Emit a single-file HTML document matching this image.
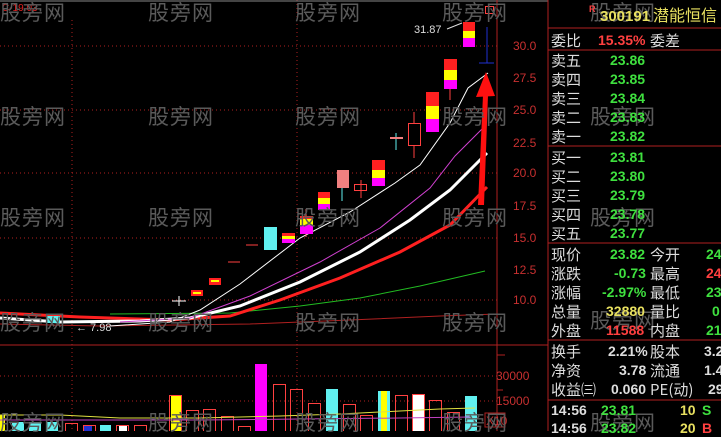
<!DOCTYPE html>
<html><head><meta charset="utf-8"><style>
body{margin:0;background:#000;width:721px;height:431px;overflow:hidden;position:relative;font-family:"Liberation Sans","Noto Sans CJK SC",sans-serif}
.wm{position:absolute;color:#5a5a5a;font-size:21px;font-family:"Noto Sans CJK SC",sans-serif;line-height:21px;letter-spacing:1px}
.t{position:absolute;font-size:15px;line-height:17px;white-space:nowrap;font-family:"Noto Sans CJK SC",sans-serif}
.v{position:absolute;font-size:14px;line-height:17px;font-weight:bold;white-space:nowrap;text-align:right;font-family:"Liberation Sans",sans-serif}
.g{color:#3fe03f}.w{color:#ddd}.r{color:#ff4040}.y{color:#e8e060}
</style></head><body>
<svg width="721" height="431" style="position:absolute;left:0;top:0">
<g stroke="#b02020" stroke-dasharray="1,3" stroke-width="1">
<line x1="0" y1="46" x2="497" y2="46"/><line x1="0" y1="110" x2="497" y2="110"/><line x1="0" y1="173" x2="497" y2="173"/><line x1="0" y1="238" x2="497" y2="238"/><line x1="0" y1="300" x2="497" y2="300"/>
<line x1="72" y1="20" x2="72" y2="431"/><line x1="297" y1="0" x2="297" y2="431"/>
<line x1="0" y1="376" x2="497" y2="376"/><line x1="0" y1="401" x2="497" y2="401"/>
</g>
<line x1="0" y1="1" x2="548" y2="1" stroke="#888"/>
<line x1="497" y1="0" x2="497" y2="431" stroke="#b02020"/>
<line x1="0" y1="345" x2="548" y2="345" stroke="#b02020"/>
<line x1="548" y1="0" x2="548" y2="431" stroke="#b02020"/>
<g fill="#c83030" font-size="12" font-family="Liberation Sans">
<text x="513" y="50">30.0</text><text x="513" y="82">27.5</text><text x="513" y="114">25.0</text><text x="513" y="147">22.5</text><text x="513" y="177">20.0</text><text x="513" y="210">17.5</text><text x="513" y="242">15.0</text><text x="513" y="274">12.5</text><text x="513" y="304">10.0</text>
<text x="496" y="380">30000</text><text x="496" y="405">15000</text>
</g>
<line x1="497" y1="355" x2="505" y2="355" stroke="#b02020"/><line x1="497" y1="390" x2="503" y2="390" stroke="#b02020"/>
<rect x="485" y="413" width="20" height="14" fill="none" stroke="#b02020"/><text x="486" y="425" fill="#c83030" font-size="12">X10</text>
<text x="2" y="11" fill="#e02020" font-size="10">C-19.03</text>
<!-- MAs -->
<polyline fill="none" stroke="#b02020" stroke-width="1" points="0,324 100,326 250,324 350,320 440,316 497,314"/>
<polyline fill="none" stroke="#22bb22" stroke-width="1" points="110,314 230,313 300,306 360,298 420,286 485,271"/>
<polyline fill="none" stroke="#ff2020" stroke-width="3" points="0,313 80,317 170,320 230,316 280,300 340,278 400,252 450,225 487,187"/>
<polyline fill="none" stroke="#fff" stroke-width="3" points="0,318 60,322 140,321 190,318 240,306 300,282 360,252 410,220 450,190 487,153"/>
<polyline fill="none" stroke="#d040d0" stroke-width="1" points="120,322 190,318 250,296 320,262 380,228 430,188 455,156 483,128"/>
<polyline fill="none" stroke="#fff" stroke-width="1" points="110,326 170,322 200,310 240,284 300,238 350,212 395,183 420,165 450,123 468,88 488,73"/>
<!-- candles -->
<line x1="172" y1="301" x2="186" y2="301" stroke="#fff"/><line x1="179" y1="296" x2="179" y2="306" stroke="#fff"/>
<rect x="191" y="290" width="12" height="6" fill="#ff2020"/><rect x="193" y="292" width="8" height="2" fill="#ff0"/>
<rect x="209" y="278" width="12" height="7" fill="#ff2020"/><rect x="211" y="280" width="8" height="2" fill="#ff0"/>
<line x1="228" y1="262" x2="240" y2="262" stroke="#ff4040"/>
<line x1="246" y1="245" x2="258" y2="245" stroke="#ff4040"/>
<rect x="264" y="227" width="13" height="23" fill="#60f0f0"/>
<rect x="282" y="233" width="13" height="10" fill="#ff2020"/><rect x="282" y="236" width="13" height="3" fill="#ff0"/><rect x="282" y="239" width="13" height="4" fill="#f0f"/>
<line x1="306" y1="209" x2="306" y2="237" stroke="#ff6060"/>
<rect x="300" y="216" width="13" height="18" fill="#ff2020"/><rect x="300" y="219" width="13" height="6" fill="#ff0"/><rect x="300" y="225" width="13" height="9" fill="#f0f"/>
<rect x="318" y="192" width="12" height="18" fill="#ff2020"/><rect x="318" y="198" width="12" height="6" fill="#ff0"/><rect x="318" y="204" width="12" height="6" fill="#f0f"/>
<line x1="342" y1="188" x2="342" y2="201" stroke="#60f0f0"/><rect x="337" y="170" width="12" height="18" fill="#f08080"/>
<line x1="361" y1="180" x2="361" y2="198" stroke="#ff4040"/><rect x="354.5" y="184.5" width="12" height="6" fill="none" stroke="#ff4040"/>
<rect x="372" y="160" width="13" height="26" fill="#ff2020"/><rect x="372" y="170" width="13" height="8" fill="#ff0"/><rect x="372" y="178" width="13" height="8" fill="#f0f"/>
<line x1="396" y1="133" x2="396" y2="150" stroke="#60f0f0"/><line x1="390" y1="138" x2="403" y2="138" stroke="#f08080" stroke-width="2"/>
<line x1="414" y1="112" x2="414" y2="158" stroke="#ff4040"/><rect x="408.5" y="123.5" width="12" height="22" fill="#000" stroke="#ff4040"/>
<rect x="426" y="92" width="13" height="40" fill="#ff2020"/><rect x="426" y="106" width="13" height="13" fill="#ff0"/><rect x="426" y="119" width="13" height="13" fill="#f0f"/>
<line x1="450" y1="88" x2="450" y2="100" stroke="#ff4040"/>
<rect x="444" y="59" width="13" height="30" fill="#ff2020"/><rect x="444" y="70" width="13" height="10" fill="#ff0"/><rect x="444" y="80" width="13" height="9" fill="#f0f"/>
<rect x="463" y="22" width="12" height="25" fill="#ff2020"/><rect x="463" y="31" width="12" height="7" fill="#ff0"/><rect x="463" y="38" width="12" height="9" fill="#f0f"/>
<rect x="485.5" y="6.5" width="8" height="7" fill="none" stroke="#ff4040"/>
<line x1="487" y1="27" x2="487" y2="63" stroke="#2030d0"/><line x1="479" y1="63" x2="494" y2="63" stroke="#2030d0"/>
<text x="414" y="33" fill="#ddd" font-size="11">31.87</text><line x1="447" y1="29" x2="462" y2="23" stroke="#ddd"/>
<text x="76" y="331" fill="#ddd" font-size="11">← 7.98</text>
<rect x="47" y="316" width="13" height="7" fill="#60f0f0"/>
<!-- red arrow -->
<polygon points="478,205 483,95 488,95 484,205" fill="#ff1010"/>
<polygon points="476,97 486,72 495,96" fill="#ff1010"/>
<!-- volume -->
<g fill="none" stroke="#ff4040">
<rect x="65.5" y="423.5" width="12" height="8"/><rect x="83.5" y="425.5" width="12" height="6"/><rect x="116.5" y="425.5" width="12" height="6"/><rect x="134.5" y="425.5" width="12" height="6"/>
<rect x="186.5" y="410.5" width="12" height="21"/><rect x="203.5" y="409.5" width="12" height="22"/><rect x="221.5" y="416.5" width="12" height="15"/><rect x="238.5" y="426.5" width="12" height="5"/>
<rect x="273.5" y="384.5" width="12" height="47"/><rect x="290.5" y="389.5" width="12" height="42"/><rect x="308.5" y="403.5" width="12" height="28"/>
<rect x="343.5" y="404.5" width="12" height="27"/><rect x="360.5" y="415.5" width="12" height="16"/><rect x="395.5" y="395.5" width="12" height="36"/><rect x="429.5" y="400.5" width="12" height="31"/><rect x="447.5" y="412.5" width="12" height="19"/>
</g>
<rect x="0" y="415" width="5" height="16" fill="#ff0"/><rect x="12" y="422" width="12" height="9" fill="#60f0f0"/><rect x="29" y="422" width="12" height="9" fill="#60f0f0"/><rect x="46" y="422" width="12" height="9" fill="#60f0f0"/>
<rect x="84" y="426" width="8" height="5" fill="#2030d0"/><rect x="100" y="425" width="11" height="6" fill="#60f0f0"/><rect x="119" y="426" width="8" height="5" fill="#fff"/>
<rect x="171" y="396" width="10" height="35" fill="#ff0"/><rect x="169.5" y="395.5" width="12" height="36" fill="none" stroke="#ff4040"/>
<rect x="255" y="364" width="12" height="67" fill="#f0f"/>
<rect x="326" y="389" width="12" height="42" fill="#60f0f0"/>
<rect x="378" y="391" width="12" height="40" fill="#60f0f0"/><rect x="381" y="391" width="6" height="40" fill="#ff0"/>
<rect x="413" y="394" width="12" height="37" fill="#fff"/><rect x="412.5" y="394.5" width="12" height="37" fill="none" stroke="#ff4040"/>
<rect x="465" y="396" width="12" height="35" fill="#60f0f0"/>
<polyline fill="none" stroke="#e0e040" points="0,415 60,415 120,418 200,418 280,416 340,414 400,411 440,409 475,408"/>
<polyline fill="none" stroke="#c040c0" points="0,420 100,420 200,420 300,419 400,418 470,417"/>
<!-- right panel lines -->
<g stroke="#b02020"><line x1="548" y1="28" x2="721" y2="28"/><line x1="548" y1="50" x2="721" y2="50"/><line x1="548" y1="146" x2="721" y2="146"/><line x1="548" y1="243" x2="721" y2="243"/><line x1="548" y1="340" x2="721" y2="340"/><line x1="548" y1="400" x2="721" y2="400"/></g>
</svg>
<div class="wm" style="left:0;top:2px">股旁网</div><div class="wm" style="left:148px;top:2px">股旁网</div><div class="wm" style="left:295px;top:2px">股旁网</div><div class="wm" style="left:442px;top:2px">股旁网</div>
<div class="wm" style="left:0;top:106px">股旁网</div><div class="wm" style="left:148px;top:106px">股旁网</div><div class="wm" style="left:295px;top:106px">股旁网</div><div class="wm" style="left:442px;top:106px">股旁网</div><div class="wm" style="left:590px;top:106px">股旁网</div>
<div class="wm" style="left:0;top:207px">股旁网</div><div class="wm" style="left:148px;top:207px">股旁网</div><div class="wm" style="left:295px;top:207px">股旁网</div><div class="wm" style="left:442px;top:207px">股旁网</div><div class="wm" style="left:590px;top:207px">股旁网</div>
<div class="wm" style="left:0;top:312px">股旁网</div><div class="wm" style="left:148px;top:312px">股旁网</div><div class="wm" style="left:295px;top:312px">股旁网</div><div class="wm" style="left:442px;top:312px">股旁网</div><div class="wm" style="left:590px;top:310px">股旁网</div>
<div class="wm" style="left:0;top:412px">股旁网</div><div class="wm" style="left:148px;top:412px">股旁网</div><div class="wm" style="left:295px;top:412px">股旁网</div><div class="wm" style="left:442px;top:412px">股旁网</div><div class="wm" style="left:590px;top:412px">股旁网</div>
<div class="wm" style="left:590px;top:2px">股旁网</div>
<div style="position:absolute;left:589px;top:4px;color:#ff4040;font-size:9px;font-weight:bold">R</div>
<div class="v y" style="left:600px;top:8px;font-size:15px">300191</div>
<div class="t y" style="left:653px;top:6px;font-size:16px">潜能恒信</div>
<div class="t w" style="left:551px;top:32px">委比</div><div class="v r" style="left:598px;top:32px">15.35%</div><div class="t w" style="left:650px;top:32px">委差</div>
<div class="t w" style="left:551px;top:52px">卖五</div><div class="v g" style="left:610px;top:52px">23.86</div>
<div class="t w" style="left:551px;top:71px">卖四</div><div class="v g" style="left:610px;top:71px">23.85</div>
<div class="t w" style="left:551px;top:90px">卖三</div><div class="v g" style="left:610px;top:90px">23.84</div>
<div class="t w" style="left:551px;top:109px">卖二</div><div class="v g" style="left:610px;top:109px">23.83</div>
<div class="t w" style="left:551px;top:128px">卖一</div><div class="v g" style="left:610px;top:128px">23.82</div>
<div class="t w" style="left:551px;top:149px">买一</div><div class="v g" style="left:610px;top:149px">23.81</div>
<div class="t w" style="left:551px;top:168px">买二</div><div class="v g" style="left:610px;top:168px">23.80</div>
<div class="t w" style="left:551px;top:187px">买三</div><div class="v g" style="left:610px;top:187px">23.79</div>
<div class="t w" style="left:551px;top:206px">买四</div><div class="v g" style="left:610px;top:206px">23.78</div>
<div class="t w" style="left:551px;top:225px">买五</div><div class="v g" style="left:610px;top:225px">23.77</div>
<div class="t w" style="left:551px;top:246px">现价</div><div class="v g" style="left:610px;top:246px">23.82</div><div class="t w" style="left:650px;top:246px">今开</div><div class="v g" style="left:706px;top:246px">24</div>
<div class="t w" style="left:551px;top:265px">涨跌</div><div class="v g" style="left:614px;top:265px">-0.73</div><div class="t w" style="left:650px;top:265px">最高</div><div class="v r" style="left:706px;top:265px">24</div>
<div class="t w" style="left:551px;top:284px">涨幅</div><div class="v g" style="left:602px;top:284px">-2.97%</div><div class="t w" style="left:650px;top:284px">最低</div><div class="v g" style="left:706px;top:284px">23</div>
<div class="t w" style="left:551px;top:303px">总量</div><div class="v y" style="left:606px;top:303px">32880</div><div class="t w" style="left:650px;top:303px">量比</div><div class="v g" style="left:712px;top:303px">0</div>
<div class="t w" style="left:551px;top:322px">外盘</div><div class="v r" style="left:606px;top:322px">11588</div><div class="t w" style="left:650px;top:322px">内盘</div><div class="v g" style="left:706px;top:322px">21</div>
<div class="t w" style="left:551px;top:343px">换手</div><div class="v w" style="left:608px;top:343px">2.21%</div><div class="t w" style="left:650px;top:343px">股本</div><div class="v w" style="left:704px;top:343px">3.2</div>
<div class="t w" style="left:551px;top:362px">净资</div><div class="v w" style="left:619px;top:362px">3.78</div><div class="t w" style="left:650px;top:362px">流通</div><div class="v w" style="left:704px;top:362px">1.4</div>
<div class="t w" style="left:551px;top:381px">收益㈢</div><div class="v w" style="left:611px;top:381px">0.060</div><div class="t w" style="left:650px;top:381px">PE(动)</div><div class="v w" style="left:708px;top:381px">29</div>
<div class="v w" style="left:551px;top:402px">14:56</div><div class="v g" style="left:601px;top:402px">23.81</div><div class="v y" style="left:680px;top:402px">10</div><div class="v g" style="left:702px;top:402px">S</div>
<div class="v w" style="left:551px;top:420px">14:56</div><div class="v g" style="left:601px;top:420px">23.82</div><div class="v y" style="left:680px;top:420px">20</div><div class="v r" style="left:702px;top:420px">B</div>
</body></html>
